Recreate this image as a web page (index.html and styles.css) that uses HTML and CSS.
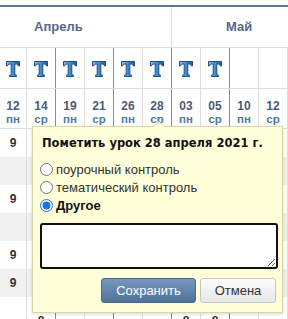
FILE: index.html
```html
<!DOCTYPE html>
<html>
<head>
<meta charset="utf-8">
<title>Журнал</title>
<link rel="stylesheet" href="styles.css">
</head>
<body>
<div class="topbar"></div>
<div class="journal">
	<div class="months">
		<div class="month apr">Апрель</div>
		<div class="month may">Май</div>
	</div>
	<div class="row icons">
		<div class="cell"><svg class="ticon" viewBox="0 0 14 16"><use href="#t"/></svg></div>
		<div class="cell wk"><svg class="ticon" viewBox="0 0 14 16"><use href="#t"/></svg></div>
		<div class="cell"><svg class="ticon" viewBox="0 0 14 16"><use href="#t"/></svg></div>
		<div class="cell wk"><svg class="ticon" viewBox="0 0 14 16"><use href="#t"/></svg></div>
		<div class="cell"><svg class="ticon" viewBox="0 0 14 16"><use href="#t"/></svg></div>
		<div class="cell wk"><svg class="ticon" viewBox="0 0 14 16"><use href="#t"/></svg></div>
		<div class="cell"><svg class="ticon" viewBox="0 0 14 16"><use href="#t"/></svg></div>
		<div class="cell wk"><svg class="ticon" viewBox="0 0 14 16"><use href="#t"/></svg></div>
		<div class="cell"></div>
		<div class="cell"></div>
	</div>
	<div class="row dates">
		<div class="cell"><b>12</b><span>пн</span></div>
		<div class="cell wk"><b>14</b><span>ср</span></div>
		<div class="cell"><b>19</b><span>пн</span></div>
		<div class="cell wk"><b>21</b><span>ср</span></div>
		<div class="cell"><b>26</b><span>пн</span></div>
		<div class="cell wk"><b>28</b><span>ср</span></div>
		<div class="cell"><b>03</b><span>пн</span></div>
		<div class="cell wk"><b>05</b><span>ср</span></div>
		<div class="cell"><b>10</b><span>пн</span></div>
		<div class="cell"><b>12</b><span>ср</span></div>
	</div>
	<div class="row mark">
		<div class="cell">9</div><div class="cell wk"></div><div class="cell"></div><div class="cell wk"></div><div class="cell"></div>
		<div class="cell wk"></div><div class="cell"></div><div class="cell wk"></div><div class="cell"></div><div class="cell"></div>
	</div>
	<div class="row mark odd">
		<div class="cell"></div><div class="cell wk"></div><div class="cell"></div><div class="cell wk"></div><div class="cell"></div>
		<div class="cell wk"></div><div class="cell"></div><div class="cell wk"></div><div class="cell"></div><div class="cell"></div>
	</div>
	<div class="row mark">
		<div class="cell">9</div><div class="cell wk"></div><div class="cell"></div><div class="cell wk"></div><div class="cell"></div>
		<div class="cell wk"></div><div class="cell"></div><div class="cell wk"></div><div class="cell"></div><div class="cell"></div>
	</div>
	<div class="row mark odd">
		<div class="cell"></div><div class="cell wk"></div><div class="cell"></div><div class="cell wk"></div><div class="cell"></div>
		<div class="cell wk"></div><div class="cell"></div><div class="cell wk"></div><div class="cell"></div><div class="cell"></div>
	</div>
	<div class="row mark">
		<div class="cell">9</div><div class="cell wk"></div><div class="cell"></div><div class="cell wk"></div><div class="cell"></div>
		<div class="cell wk"></div><div class="cell"></div><div class="cell wk"></div><div class="cell"></div><div class="cell"></div>
	</div>
	<div class="row mark odd">
		<div class="cell">9</div><div class="cell wk"></div><div class="cell"></div><div class="cell wk"></div><div class="cell"></div>
		<div class="cell wk"></div><div class="cell"></div><div class="cell wk"></div><div class="cell"></div><div class="cell"></div>
	</div>
	<div class="row mark last">
		<div class="cell"></div><div class="cell wk">8</div><div class="cell"></div><div class="cell wk"></div><div class="cell"></div>
		<div class="cell wk"></div><div class="cell">8</div><div class="cell wk">8</div><div class="cell"></div><div class="cell"></div>
	</div>
</div>

<div class="popup">
	<div class="popup-title">Пометить урок 28 апреля 2021 г.</div>
	<label class="opt"><input type="radio" name="kind"> поурочный контроль</label>
	<label class="opt"><input type="radio" name="kind"> тематический контроль</label>
	<label class="opt other"><input type="radio" name="kind" checked> Другое</label>
	<textarea class="note"></textarea>
	<div class="buttons">
		<button class="btn save">Сохранить</button>
		<button class="btn cancel">Отмена</button>
	</div>
</div>

<svg width="0" height="0" class="defs">
	<defs>
		<linearGradient id="tg" x1="0" y1="0" x2="1" y2="0">
			<stop offset="0" stop-color="#9cc8ee"/>
			<stop offset="0.5" stop-color="#3d8ad4"/>
			<stop offset="1" stop-color="#1f5f9e"/>
		</linearGradient>
		<path id="t" d="M0.5 0.5 H13.5 V5 H12.5 L11.5 3 H8.8 V13.5 L10.5 14.2 V15.5 H3.5 V14.2 L5.2 13.5 V3 H2.5 L1.5 5 H0.5 Z" fill="url(#tg)" stroke="#1d4f86" stroke-width="1"/>
	</defs>
</svg>
</body>
</html>
```
FILE: styles.css
```css
body {
	margin: 0;
	font-family: "Liberation Sans", Arial, sans-serif;
	background: #fff;
	overflow: hidden;
}

.topbar {
	margin-top: 5px;
	height: 2px;
	background: #5f7891;
}

.journal {
	width: 288px;
}

.months {
	display: grid;
	grid-template-columns: 172px 116px;
	height: 40px;
	border-bottom: 1px solid #dddddd;
}

.month {
	font-size: 13px;
	font-weight: bold;
	color: #56688a;
	line-height: 40px;
}

.apr {
	padding-left: 34px;
	border-right: 1px solid #dddddd;
}

.may {
	padding-left: 54px;
}

.row {
	display: grid;
	grid-template-columns: 27px repeat(9, 29px);
	border-bottom: 1px solid #dddddd;
}

.cell {
	box-sizing: border-box;
	border-right: 1px solid #dddddd;
	display: flex;
	flex-direction: column;
	align-items: center;
	justify-content: center;
}

.cell.wk {
	border-right-color: #4b9be2;
}

.icons {
	height: 40px;
}

.ticon {
	width: 14px;
	height: 16px;
	margin-top: 1px;
}

.dates {
	height: 39px;
}

.dates .cell {
	justify-content: flex-start;
	padding-top: 11px;
}

.dates b {
	font-size: 12px;
	line-height: 13px;
	color: #4c5b78;
}

.dates span {
	font-size: 11.5px;
	line-height: 13px;
	font-weight: bold;
	color: #4f7aa6;
}

.mark {
	height: 28px;
	border-bottom: none;
}

.mark .cell {
	font-size: 12px;
	font-weight: bold;
	color: #333;
}

.mark.last .cell {
	justify-content: flex-start;
	padding-top: 17px;
}

.mark.odd {
	background: #f1f1f1;
}

.defs {
	position: absolute;
}

.popup {
	position: absolute;
	left: 32px;
	top: 126px;
	width: 251px;
	height: 187px;
	box-sizing: border-box;
	padding: 9px 6px 0 7px;
	background: #ffffd9;
	border: 1px solid #dcd6a4;
	box-shadow: 0 1px 3px rgba(0, 0, 0, 0.15);
	font-family: "Liberation Sans", Arial, sans-serif;
	font-size: 13px;
	color: #222;
}

.popup:before {
	content: "";
	position: absolute;
	left: 120px;
	top: -6px;
	border-left: 6px solid transparent;
	border-right: 6px solid transparent;
	border-bottom: 6px solid #dcd6a4;
}

.popup:after {
	content: "";
	position: absolute;
	left: 121px;
	top: -5px;
	border-left: 5px solid transparent;
	border-right: 5px solid transparent;
	border-bottom: 5px solid #ffffd9;
}

.popup-title {
	font-family: "DejaVu Sans", Verdana, sans-serif;
	font-weight: bold;
	font-size: 11.5px;
	line-height: 15px;
	padding-left: 2px;
	margin-bottom: 9px;
	color: #111;
}

.opt {
	display: flex;
	align-items: center;
	height: 18px;
	font-size: 13px;
	color: #333;
}

.opt input {
	margin: 0 3px 0 0;
	width: 13px;
	height: 13px;
	accent-color: #1a73e8;
}

.opt.other {
	font-weight: bold;
	color: #111;
}

.note {
	display: block;
	box-sizing: border-box;
	width: 238px;
	height: 46px;
	margin-top: 9px;
	border: 2px solid #111;
	border-radius: 3px;
	background: #fff;
	resize: both;
	outline: none;
}

.buttons {
	display: flex;
	justify-content: flex-end;
	gap: 4px;
	margin-top: 9px;
}

.btn {
	height: 25px;
	font-family: "Liberation Sans", Arial, sans-serif;
	font-size: 13px;
	border-radius: 3px;
	padding: 0;
}

.save {
	width: 95px;
	color: #fff;
	border: 1px solid #4a6a90;
	background: linear-gradient(#7698bf, #4f729b);
}

.cancel {
	width: 76px;
	color: #333;
	border: 1px solid #c4c4c4;
	background: linear-gradient(#fdfdfd, #e6e6e6);
}
```
